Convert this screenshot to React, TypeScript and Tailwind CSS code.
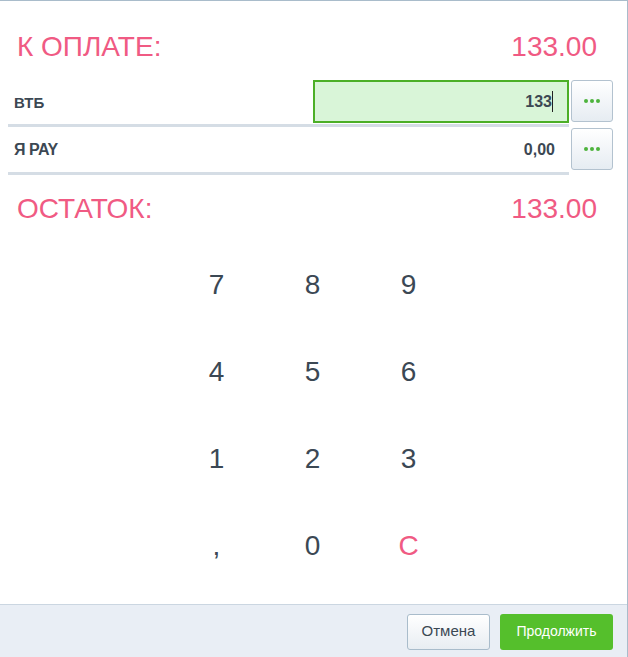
import React from "react";

function Dots() {
  return (
    <div className="flex items-center gap-[2px]">
      <span className="w-[4px] h-[4px] rounded-full bg-[#4db33d]" />
      <span className="w-[4px] h-[4px] rounded-full bg-[#4db33d]" />
      <span className="w-[4px] h-[4px] rounded-full bg-[#4db33d]" />
    </div>
  );
}

function MoreButton() {
  return (
    <button className="w-[42px] h-[42px] flex items-center justify-center rounded-[3px] border border-[#b3c2cf] bg-gradient-to-b from-white to-[#e6ecf2]">
      <Dots />
    </button>
  );
}

export default function App() {
  const keys = ["7", "8", "9", "4", "5", "6", "1", "2", "3", ",", "0", "C"];
  return (
    <div
      className="w-[628px] h-[657px] flex flex-col bg-white border-t border-r border-[#a9bccb] overflow-hidden"
      style={{ fontFamily: '"Liberation Sans", Arial, sans-serif' }}
    >
      <div className="flex-1 flex flex-col">
        <div className="mt-[26px] h-[40px] flex items-center justify-between pl-[17px] pr-[30px] text-[28px] text-[#f05a83]">
          <span>К ОПЛАТЕ:</span>
          <span>133.00</span>
        </div>

        <div className="mt-[13px] pl-[8px] pr-[14px] flex flex-col gap-[1px]">
          <div className="flex items-start gap-[2px]">
            <div className="flex-1 h-[47px] border-b-[3px] border-[#d5dde5] flex items-start justify-between">
              <span className="pl-[6px] mt-[12px] text-[15px] font-bold text-[#3c4853]">ВТБ</span>
              <div className="w-[256px] h-[43px] border-2 border-[#4caf27] bg-[#d9f5d8] flex items-center justify-end pr-[14px] text-[16px] font-bold text-[#3c4853]">
                <span>133</span>
                <span className="w-[1px] h-[21px] bg-[#222]" />
              </div>
            </div>
            <MoreButton />
          </div>

          <div className="flex items-start gap-[2px]">
            <div className="flex-1 h-[47px] border-b-[3px] border-[#d5dde5] flex items-center justify-between">
              <span className="pl-[6px] text-[16px] font-bold text-[#3c4853] tracking-[-0.5px]">Я PAY</span>
              <span className="pr-[14px] text-[16px] font-bold text-[#3c4853]">0,00</span>
            </div>
            <MoreButton />
          </div>
        </div>

        <div className="mt-[14px] h-[40px] flex items-center justify-between pl-[17px] pr-[30px] text-[28px] text-[#f05a83]">
          <span>ОСТАТОК:</span>
          <span>133.00</span>
        </div>

        <div className="mt-[12px] self-center grid grid-cols-[96px_96px_96px] auto-rows-[87px] ml-[-2px]">
          {keys.map((k) => (
            <div
              key={k}
              className={`flex items-center justify-center text-[28px] ${k === "C" ? "text-[#f05a83]" : "text-[#3b4854]"}`}
            >
              {k}
            </div>
          ))}
        </div>
      </div>

      <div className="h-[53px] shrink-0 border-t border-[#cbd6e1] bg-[#e9eef5] flex items-center justify-end gap-[10px] pr-[14px] pt-[1px]">
        <button className="w-[83px] h-[36px] rounded-[3px] border border-[#a9bccb] bg-gradient-to-b from-white to-[#e8edf2] text-[15px] text-[#3b4854]">
          Отмена
        </button>
        <button className="w-[113px] h-[36px] rounded-[3px] bg-[#55bf2c] text-[14px] text-white">
          Продолжить
        </button>
      </div>
    </div>
  );
}
